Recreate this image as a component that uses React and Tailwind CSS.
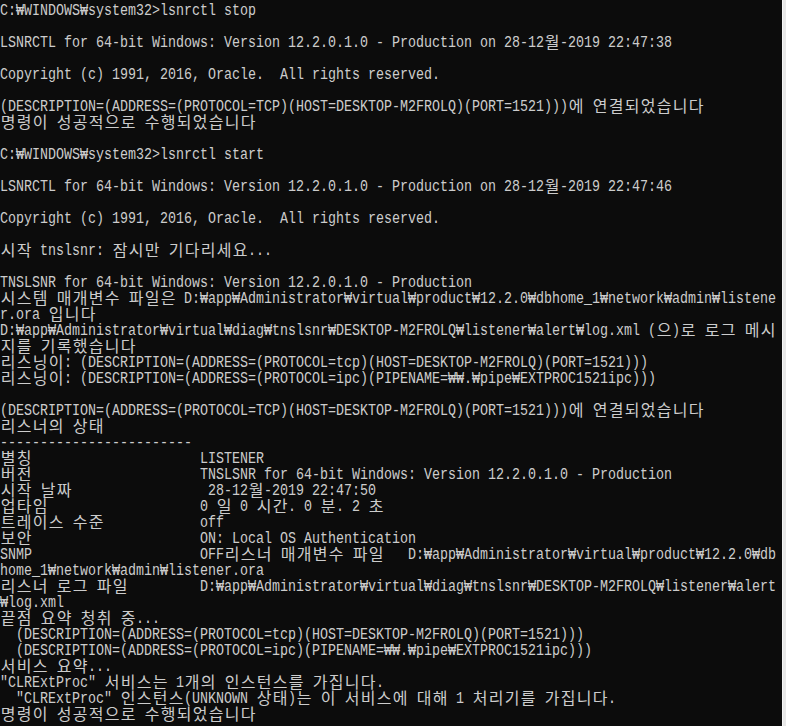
import React from "react";

const W = "\u20A9";
const lines = [
  `C:${W}WINDOWS${W}system32>lsnrctl stop`,
  ``,
  `LSNRCTL for 64-bit Windows: Version 12.2.0.1.0 - Production on 28-12월-2019 22:47:38`,
  ``,
  `Copyright (c) 1991, 2016, Oracle.  All rights reserved.`,
  ``,
  `(DESCRIPTION=(ADDRESS=(PROTOCOL=TCP)(HOST=DESKTOP-M2FROLQ)(PORT=1521)))에 연결되었습니다`,
  `명령이 성공적으로 수행되었습니다`,
  ``,
  `C:${W}WINDOWS${W}system32>lsnrctl start`,
  ``,
  `LSNRCTL for 64-bit Windows: Version 12.2.0.1.0 - Production on 28-12월-2019 22:47:46`,
  ``,
  `Copyright (c) 1991, 2016, Oracle.  All rights reserved.`,
  ``,
  `시작 tnslsnr: 잠시만 기다리세요...`,
  ``,
  `TNSLSNR for 64-bit Windows: Version 12.2.0.1.0 - Production`,
  `시스템 매개변수 파일은 D:${W}app${W}Administrator${W}virtual${W}product${W}12.2.0${W}dbhome_1${W}network${W}admin${W}listene`,
  `r.ora 입니다`,
  `D:${W}app${W}Administrator${W}virtual${W}diag${W}tnslsnr${W}DESKTOP-M2FROLQ${W}listener${W}alert${W}log.xml (으)로 로그 메시`,
  `지를 기록했습니다`,
  `리스닝이: (DESCRIPTION=(ADDRESS=(PROTOCOL=tcp)(HOST=DESKTOP-M2FROLQ)(PORT=1521)))`,
  `리스닝이: (DESCRIPTION=(ADDRESS=(PROTOCOL=ipc)(PIPENAME=${W}${W}.${W}pipe${W}EXTPROC1521ipc)))`,
  ``,
  `(DESCRIPTION=(ADDRESS=(PROTOCOL=TCP)(HOST=DESKTOP-M2FROLQ)(PORT=1521)))에 연결되었습니다`,
  `리스너의 상태`,
  `------------------------`,
  `별칭                     LISTENER`,
  `버전                     TNSLSNR for 64-bit Windows: Version 12.2.0.1.0 - Production`,
  `시작 날짜                 28-12월-2019 22:47:50`,
  `업타임                   0 일 0 시간. 0 분. 2 초`,
  `트레이스 수준            off`,
  `보안                     ON: Local OS Authentication`,
  `SNMP                     OFF리스너 매개변수 파일   D:${W}app${W}Administrator${W}virtual${W}product${W}12.2.0${W}db`,
  `home_1${W}network${W}admin${W}listener.ora`,
  `리스너 로그 파일         D:${W}app${W}Administrator${W}virtual${W}diag${W}tnslsnr${W}DESKTOP-M2FROLQ${W}listener${W}alert`,
  `${W}log.xml`,
  `끝점 요약 청취 중...`,
  `  (DESCRIPTION=(ADDRESS=(PROTOCOL=tcp)(HOST=DESKTOP-M2FROLQ)(PORT=1521)))`,
  `  (DESCRIPTION=(ADDRESS=(PROTOCOL=ipc)(PIPENAME=${W}${W}.${W}pipe${W}EXTPROC1521ipc)))`,
  `서비스 요약...`,
  `"CLRExtProc" 서비스는 1개의 인스턴스를 가집니다.`,
  `  "CLRExtProc" 인스턴스(UNKNOWN 상태)는 이 서비스에 대해 1 처리기를 가집니다.`,
  `명령이 성공적으로 수행되었습니다`,
];

const isWide = (ch) => {
  const c = ch.codePointAt(0);
  return (c >= 0xac00 && c <= 0xd7a3) || (c >= 0x1100 && c <= 0x11ff) || (c >= 0x3130 && c <= 0x318f);
};

function toRuns(line) {
  const out = [];
  for (const ch of line) {
    const w = isWide(ch);
    const last = out[out.length - 1];
    if (!w && last && !last.wide) {
      last.text += ch;
      last.n += 1;
    } else out.push({ wide: w, text: ch, n: 1 });
  }
  return out;
}

function Line({ text }) {
  const runs = toRuns(text);
  return (
    <div className="flex h-4">
      {runs.map((r, i) =>
        r.wide ? (
          <span
            key={i}
            className="flex h-4 w-4 shrink-0 justify-center overflow-visible whitespace-pre font-['Noto_Sans_CJK_KR',sans-serif] text-[16px] leading-4 translate-y-[0.5px]"
          >
            {r.text}
          </span>
        ) : (
          <span key={i} className="block h-4 shrink-0" style={{ width: r.n * 8 }}>
            <span className="block origin-left scale-x-[0.8333] translate-y-[3px] whitespace-pre text-[16px] leading-4">
              {r.text}
            </span>
          </span>
        )
      )}
    </div>
  );
}

export default function App() {
  return (
    <div className="flex h-[726px] w-[786px] overflow-hidden bg-[#0c0c0c]">
      <div className="w-[782px] shrink-0 overflow-hidden bg-[#0c0c0c] font-['Liberation_Mono','DejaVu_Sans_Mono',monospace] text-[#cccccc]">
        {lines.map((l, i) => (
          <Line key={i} text={l} />
        ))}
      </div>
      <div className="flex-1 border-l border-[#f7f7f7] bg-[#e8e8e8]" />
    </div>
  );
}
